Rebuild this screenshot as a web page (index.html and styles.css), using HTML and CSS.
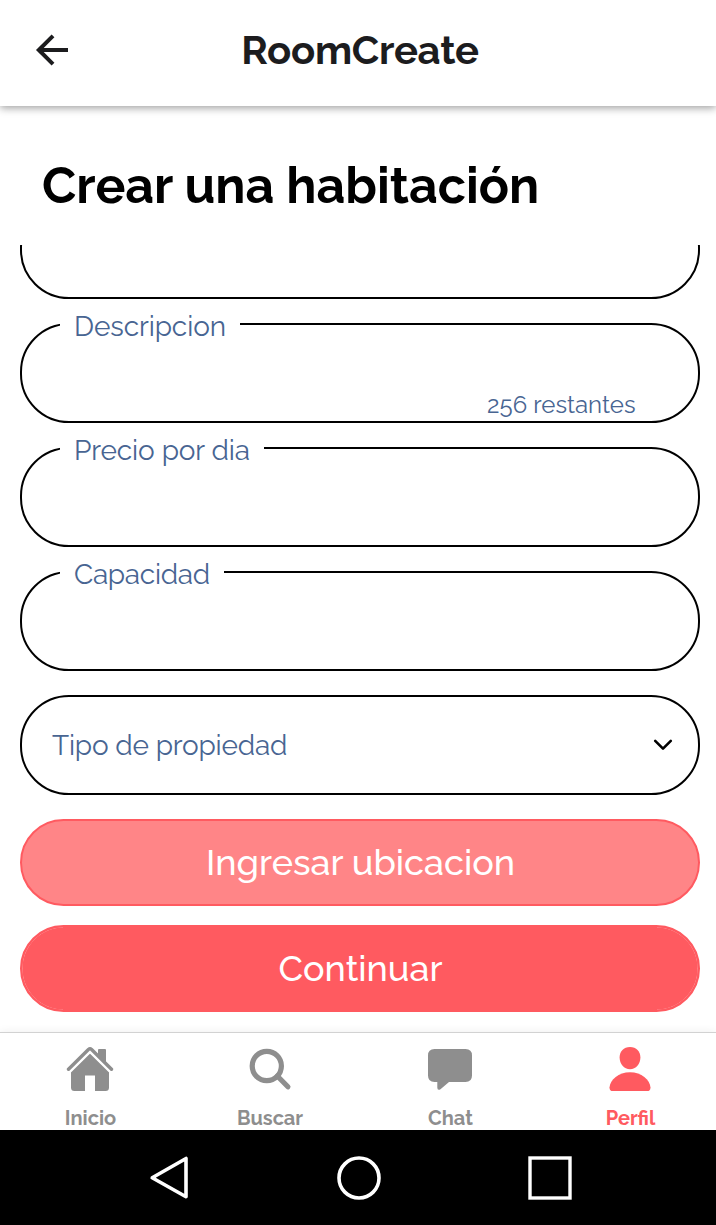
FILE: index.html
```html
<!DOCTYPE html>
<html lang="es">
<head>
<meta charset="utf-8">
<title>RoomCreate</title>
<link rel="stylesheet" href="styles.css">
</head>
<body>
<div class="app">
  <header class="header">
    <svg class="back" viewBox="0 0 36 36"><path d="M34 18H5M19 3.800L4.800 18 19 32.200" fill="none" stroke="#1c1c1e" stroke-width="4"/></svg>
    <div class="header-title">RoomCreate</div>
  </header>
  <main class="main">
    <h1 class="title">Crear una habitación</h1>
    <div class="scroller">
      <form class="form">
        <div class="field"></div>
        <div class="field"><label class="label label-description">Descripcion</label><span class="counter">256 restantes</span></div>
        <div class="field"><label class="label label-price">Precio por dia</label></div>
        <div class="field"><label class="label label-capacity">Capacidad</label></div>
        <div class="field select">
          <span class="select-text">Tipo de propiedad</span>
          <svg class="chevron" viewBox="0 0 20 14"><path d="M2.2 2.900L10 10.700l7.8-7.8" fill="none" stroke="#000" stroke-width="2.6" stroke-linecap="round" stroke-linejoin="round"/></svg>
        </div>
        <div class="button light">Ingresar ubicacion</div>
        <div class="button primary">Continuar</div>
      </form>
    </div>
  </main>
  <nav class="tabs">
    <div class="tab">
      <svg class="icon" viewBox="0 0 48 48"><path d="M5 24L24 7l19 17v17.500q0 3.500-3.500 3.500H29V29.500H19V45H8.500Q5 45 5 41.500Z"/><path d="M2.500 23.500L22 4.200q2-1.800 4 0l19.500 19.300" fill="none" stroke="#fff" stroke-width="7.600"/><path d="M2.500 23.200L22.400 3.500q1.600-1.400 3.200 0l19.900 19.700" fill="none" stroke="currentColor" stroke-width="3.400" stroke-linecap="round"/><path d="M32 9V4q0-1 1-1h6q1 0 1 1v13Z"/></svg>
      <span class="tab-text">Inicio</span>
    </div>
    <div class="tab">
      <svg class="icon" viewBox="0 0 48 48"><circle cx="20.800" cy="20" r="14.600" fill="none" stroke="currentColor" stroke-width="5.200"/><path d="M31.300 30l10.600 10.800" stroke="currentColor" stroke-width="5.200" stroke-linecap="round"/></svg>
      <span class="tab-search">Buscar</span>
    </div>
    <div class="tab">
      <svg class="icon" viewBox="0 0 48 48"><path d="M8.500 3h31Q46 3 46 9.500v20q0 6.500-6.500 6.500H23l-8.500 7.200q-3.200 1.600-3.200-1.700V36H8.500Q2 36 2 29.500v-20Q2 3 8.500 3Z"/></svg>
      <span class="tab-text">Chat</span>
    </div>
    <div class="tab active">
      <svg class="icon" viewBox="0 0 48 48"><path d="M24 1c6.300 0 10.400 4.400 10.400 10.400C34.400 17.800 30 23.200 24 23.200s-10.400-5.400-10.400-11.800C13.600 5.400 17.700 1 24 1Z"/><path d="M24 26.200c11.500 0 19.800 7.300 20.500 15.200q0 3.600-3.400 3.600H6.900q-3.400 0-3.400-3.600C4.200 33.500 12.500 26.200 24 26.200Z"/></svg>
      <span class="tab-text">Perfil</span>
    </div>
  </nav>
  <footer class="system">
    <svg viewBox="0 0 48 48"><path d="M41 4.500v38.300L7.200 23.800Z" fill="none" stroke="#fff" stroke-width="3.600" stroke-linejoin="round"/></svg>
    <svg viewBox="0 0 48 48"><circle cx="24" cy="24" r="20" fill="none" stroke="#fff" stroke-width="3.600"/></svg>
    <svg viewBox="0 0 48 48"><rect x="4" y="4" width="40" height="40" fill="none" stroke="#fff" stroke-width="3.400"/></svg>
  </footer>
</div>
</body>
</html>
```
FILE: styles.css
```css
* { box-sizing: border-box; }
body { margin: 0; background: #fff; font-family: Raleway, Lato, sans-serif; }
svg { display: block; }
.app { width: 716px; height: 1225px; display: flex; flex-direction: column; overflow: hidden; white-space: nowrap; }
.header { height: 106px; flex: none; display: grid; grid-template-columns: 34px 36px 1fr 66px; align-items: center; padding-bottom: 6px; background: #fff; box-shadow: 0 2px 8px rgba(0, 0, 0, .38); }
.back { grid-column: 2; width: 36px; height: 36px; }
.header-title { text-align: center; font-size: 40px; line-height: 48px; font-weight: 700; letter-spacing: -.24px; color: #1c1c1e; }
.main { flex: 1; min-height: 0; display: flex; flex-direction: column; }
.title { margin: 0; height: 139px; flex: none; padding: 50px 42px 0; font-size: 50px; line-height: 60px; font-weight: 700; letter-spacing: .03px; color: #000; }
.scroller { flex: 1; min-height: 0; overflow: hidden; display: flex; flex-direction: column; justify-content: flex-end; padding: 0 16px 20px 20px; }
.form { display: flex; flex-direction: column; gap: 24px; flex: none; color: #486592; }
.field { position: relative; height: 100px; border: 2px solid #000; border-radius: 49px; font-size: 28px; line-height: 34px; }
.label { position: absolute; left: 38px; top: -15px; padding: 0 14px; background: #fff; }
.label-description { letter-spacing: -.1px; }
.label-price { letter-spacing: -.12px; }
.label-capacity { letter-spacing: -.3px; }
.counter { position: absolute; right: 62.5px; bottom: 1px; font-size: 24px; line-height: 30px; }
.select { display: flex; align-items: center; justify-content: space-between; padding: 0 25px 0 30px; }
.select-text { padding-top: 2px; letter-spacing: -.19px; }
.chevron { width: 20px; height: 14px; }
.button { height: 87px; border: 2px solid #ff5a60; border-radius: 44px; background: #ff5a60; color: #fff; display: flex; align-items: center; justify-content: center; padding: 0 0 2px 1px; font-size: 36px; line-height: 44px; font-weight: 500; }
.primary { margin-top: -5px; background: radial-gradient(circle at 41.500px 50%, #ff5a60 40.500px, #ff8c90 41.200px, #ff5a60 42px) left / 41px 100% no-repeat padding-box, radial-gradient(circle at -.5px 50%, #ff5a60 40.500px, #ff8c90 41.200px, #ff5a60 42px) right / 41px 100% no-repeat padding-box, #ff5a60; }
.light { background: #ff8587; }
.tabs { position: relative; height: 98px; flex: none; border-top: 1px solid #d2d2d2; background: #fff; display: grid; grid-template-columns: repeat(4, 180px); box-shadow: 0 -1px 8px rgba(0, 0, 0, .06); color: #8e8e8e; }
.tab { display: flex; flex-direction: column; align-items: center; padding-top: 13px; gap: 12px; font-size: 20px; line-height: 24px; font-weight: 700; }
.tab-text { padding-left: 1px; }
.tab-search { letter-spacing: -.05px; }
.icon { width: 48px; height: 48px; fill: currentColor; }
.active { color: #ff5a60; }
.system { position: relative; height: 95px; flex: none; background: #000; display: grid; grid-template-columns: 48px 48px 48px; column-gap: 142px; align-items: center; padding-left: 145px; }
.system svg { width: 48px; height: 48px; }
.system svg:last-child { margin-left: 1px; }
```
